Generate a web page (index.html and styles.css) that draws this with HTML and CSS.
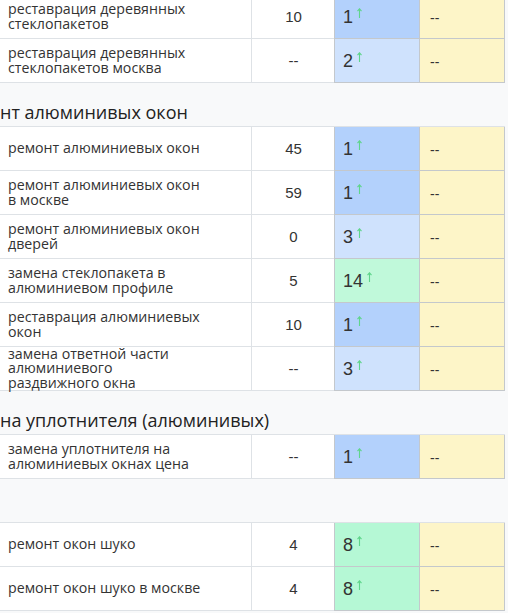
FILE: index.html
```html
<!DOCTYPE html>
<html lang="ru">
<head>
<meta charset="utf-8">
<link rel="stylesheet" href="styles.css">
</head>
<body>
<div class="table">
  <div class="row">
    <div class="c-name">реставрация деревянных стеклопакетов</div>
    <div class="c-num">10</div>
    <div class="c-pos blue">1<svg class="up" viewBox="0 0 5 10"><path d="M2.5 10V1M0.5 3.2L2.5 0.8L4.5 3.2"/></svg></div>
    <div class="c-prev">--</div>
  </div>
  <div class="row">
    <div class="c-name">реставрация деревянных стеклопакетов москва</div>
    <div class="c-num">--</div>
    <div class="c-pos lblue">2<svg class="up" viewBox="0 0 5 10"><path d="M2.5 10V1M0.5 3.2L2.5 0.8L4.5 3.2"/></svg></div>
    <div class="c-prev">--</div>
  </div>
  <div class="group"><span class="g-title">нт алюминивых окон</span></div>
  <div class="row">
    <div class="c-name">ремонт алюминиевых окон</div>
    <div class="c-num">45</div>
    <div class="c-pos blue">1<svg class="up" viewBox="0 0 5 10"><path d="M2.5 10V1M0.5 3.2L2.5 0.8L4.5 3.2"/></svg></div>
    <div class="c-prev">--</div>
  </div>
  <div class="row">
    <div class="c-name">ремонт алюминиевых окон в москве</div>
    <div class="c-num">59</div>
    <div class="c-pos blue">1<svg class="up" viewBox="0 0 5 10"><path d="M2.5 10V1M0.5 3.2L2.5 0.8L4.5 3.2"/></svg></div>
    <div class="c-prev">--</div>
  </div>
  <div class="row">
    <div class="c-name">ремонт алюминиевых окон дверей</div>
    <div class="c-num">0</div>
    <div class="c-pos lblue">3<svg class="up" viewBox="0 0 5 10"><path d="M2.5 10V1M0.5 3.2L2.5 0.8L4.5 3.2"/></svg></div>
    <div class="c-prev">--</div>
  </div>
  <div class="row">
    <div class="c-name">замена стеклопакета в алюминиевом профиле</div>
    <div class="c-num">5</div>
    <div class="c-pos green">14<svg class="up" viewBox="0 0 5 10"><path d="M2.5 10V1M0.5 3.2L2.5 0.8L4.5 3.2"/></svg></div>
    <div class="c-prev">--</div>
  </div>
  <div class="row">
    <div class="c-name">реставрация алюминиевых окон</div>
    <div class="c-num">10</div>
    <div class="c-pos blue">1<svg class="up" viewBox="0 0 5 10"><path d="M2.5 10V1M0.5 3.2L2.5 0.8L4.5 3.2"/></svg></div>
    <div class="c-prev">--</div>
  </div>
  <div class="row">
    <div class="c-name">замена ответной части алюминиевого раздвижного окна</div>
    <div class="c-num">--</div>
    <div class="c-pos lblue">3<svg class="up" viewBox="0 0 5 10"><path d="M2.5 10V1M0.5 3.2L2.5 0.8L4.5 3.2"/></svg></div>
    <div class="c-prev">--</div>
  </div>
  <div class="group"><span class="g-title">на уплотнителя (алюминивых)</span></div>
  <div class="row">
    <div class="c-name">замена уплотнителя на алюминиевых окнах цена</div>
    <div class="c-num">--</div>
    <div class="c-pos blue">1<svg class="up" viewBox="0 0 5 10"><path d="M2.5 10V1M0.5 3.2L2.5 0.8L4.5 3.2"/></svg></div>
    <div class="c-prev">--</div>
  </div>
  <div class="group"><span class="g-title"></span></div>
  <div class="row">
    <div class="c-name">ремонт окон шуко</div>
    <div class="c-num">4</div>
    <div class="c-pos mint">8<svg class="up" viewBox="0 0 5 10"><path d="M2.5 10V1M0.5 3.2L2.5 0.8L4.5 3.2"/></svg></div>
    <div class="c-prev">--</div>
  </div>
  <div class="row">
    <div class="c-name">ремонт окон шуко в москве</div>
    <div class="c-num">4</div>
    <div class="c-pos mint">8<svg class="up" viewBox="0 0 5 10"><path d="M2.5 10V1M0.5 3.2L2.5 0.8L4.5 3.2"/></svg></div>
    <div class="c-prev">--</div>
  </div>
</div>
</body>
</html>
```
FILE: styles.css
```css
html, body {
  margin: 0;
  padding: 0;
  background: #f8f9fa;
}
body {
  overflow: hidden;
  font-family: "Open Sans", "Liberation Sans", sans-serif;
  color: #333;
}
.table {
  width: 505px;
  margin-top: -5px;
}
.row {
  display: grid;
  grid-template-columns: 252px 82px 85px 86px;
  height: 44px;
}
.row > div {
  box-sizing: border-box;
  height: 44px;
  display: flex;
  align-items: center;
}
.c-name {
  background: #fff;
  border-right: 1px solid #dee2e6;
  border-bottom: 1px solid #dee2e6;
  padding: 0 47px 0 8px;
  font-size: 14.2px;
  line-height: 14.3px;
  color: #333;
}
.c-num {
  background: #fff;
  border-bottom: 1px solid #dee2e6;
  justify-content: center;
  font-family: "Liberation Sans", Arial, sans-serif;
  font-size: 15px;
  color: #333;
  padding-left: 1px;
}
.c-pos {
  border-left: 1px solid #c4c8cc;
  border-bottom: 1px solid #c4c8cc;
  padding-left: 8px;
  font-family: "Liberation Sans", Arial, sans-serif;
  font-size: 18px;
  color: #333;
  padding-top: 2px;
}
.c-pos.blue { background: #b3d1fc; }
.c-pos.lblue { background: #cfe2fd; }
.c-pos.green { background: #c0f9da; }
.c-pos.mint { background: #b5f8d5; }
.up {
  width: 5px;
  height: 10px;
  margin-left: 4px;
  align-self: flex-start;
  margin-top: 11px;
  fill: none;
  stroke: #5fd58b;
  stroke-width: 1.1;
}
.c-prev {
  background: #fdf5c8;
  border-left: 1px solid #c4c8cc;
  border-right: 1px solid #c4c8cc;
  border-bottom: 1px solid #c4c8cc;
  padding-left: 10px;
  padding-top: 3px;
  font-family: "Liberation Sans", Arial, sans-serif;
  font-size: 14px;
  color: #333;
}
.group {
  box-sizing: border-box;
  height: 44px;
  background: #f8f9fa;
  border-bottom: 1px solid #dee2e6;
  display: flex;
  align-items: flex-end;
  padding-bottom: 3px;
}
.g-title {
  font-size: 18px;
  line-height: 22px;
  color: #222;
}
```
